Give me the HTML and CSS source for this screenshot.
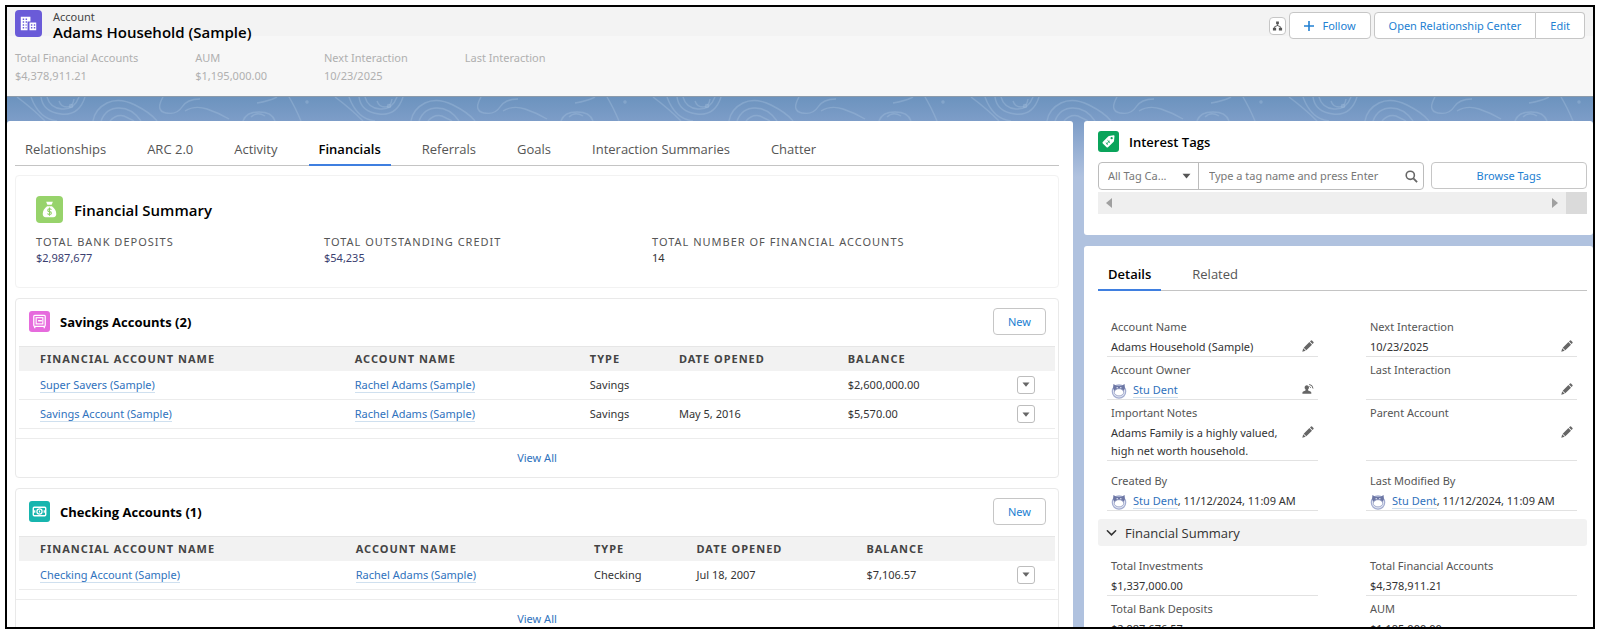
FILE: index.html
```html
<!DOCTYPE html>
<html lang="en">
<head>
<meta charset="utf-8">
<title>Adams Household (Sample) | Account</title>
<link rel="stylesheet" href="styles.css">
</head>
<body>
<svg class="sprite" aria-hidden="true">
  <symbol id="pencil" viewBox="0 0 12 12"><path d="M.3 11.700l.9-3.400 2.500 2.500zM1.700 7.700l5.700-5.600 2.600 2.600-5.700 5.600zM8 1.500l1-1q.5-.5 1 0l1.500 1.500q.4.500 0 1l-1 1z"/></symbol>
  <symbol id="owner" viewBox="0 0 12 12"><path d="M4.800 2.200a2.200 2.200 0 0 1 1.300 4v1.300l2.400 1.100q.8.400.8 1.200v1H.4v-1q0-.8.800-1.200l2.300-1.100V6.200A2.200 2.200 0 0 1 4.800 2.200z"/><path d="M7.200 1.500q3.500.2 3.800 4M7.500 3.500l1.300 1.200" fill="none" stroke="currentColor" stroke-width="1"/></symbol>
  <symbol id="bear" viewBox="0 0 16 16"><circle cx="8" cy="8.500" r="6.700" fill="#e3e7f3" stroke="#a3acd0" stroke-width="1.200"/><path d="M2.400 1l3 1.700h5.200l3-1.700.3 4.500-1.500 2.500H3.600L2.100 5.500z" fill="#6d77a5"/><ellipse cx="8" cy="9.300" rx="4.700" ry="3.600" fill="#fff" stroke="#8f98bf" stroke-width=".8"/><path d="M5.500 4.700h1.500M9 4.700h1.500" stroke="#dfe3f2" stroke-width="1"/></symbol>
  <symbol id="down" viewBox="0 0 10 6"><path d="M.6.4h8.800L5 5.800z"/></symbol>
</svg>
<div class="frame">
  <header class="record">
    <div class="record-top">
      <span class="icon icon-lg icon-account"><svg viewBox="0 0 28 28"><path d="M6 7h10v5h-3v9H6z" fill="#fff"/><path d="M15 13h7v8h-7z" fill="#fff"/><path d="M8 9.500h1.500M11 9.500h1.500M8 12.500h1.500M11 12.500h1.500M8 15.500h1.500M11 15.500h1M8 18.500h1.500M11 18.500h1M16.500 15.500h1.500M19.500 15.500H21M16.500 18.500h1.500M19.500 18.500H21" stroke="#6a5bd8" stroke-width="1.500"/></svg></span>
      <div class="record-name">
        <p class="kind">Account</p>
        <h1>Adams Household (Sample)</h1>
      </div>
      <div class="actions">
        <button class="btn hierarchy" type="button" aria-label="View hierarchy"><svg viewBox="0 0 12 12"><path d="M4.500 1h3v3h-3zM1 8h3.500v3H1zM7.500 8H11v3H7.500z"/><path d="M6 4v2M2.800 8V6.800L6 5.500l3.200 1.300V8" fill="none" stroke="currentColor"/></svg></button>
        <button class="btn follow" type="button"><svg viewBox="0 0 10 10"><path d="M5 0v10M0 5h10" stroke="currentColor" stroke-width="1.600"/></svg>Follow</button>
        <div class="group"><button class="btn" type="button">Open Relationship Center</button><button class="btn" type="button">Edit</button></div>
      </div>
    </div>
    <dl class="highlights">
      <div><dt>Total Financial Accounts</dt><dd>$4,378,911.21</dd></div>
      <div><dt>AUM</dt><dd>$1,195,000.00</dd></div>
      <div><dt>Next Interaction</dt><dd>10/23/2025</dd></div>
      <div><dt>Last Interaction</dt><dd></dd></div>
    </dl>
  </header>

  <div class="stage">
    <svg class="contours" aria-hidden="true">
      <defs><pattern id="topo" width="318" height="24" patternUnits="userSpaceOnUse">
        <g fill="none" stroke="#a3bedb" stroke-opacity=".4" stroke-width="1.400">
          <path d="M10 0q16 12 28 24M34 0q2 15 20 17t24-17M40 0q3 11 15 12t17-12M52 4q2 6 8 6t7-8M24 0q8 22 26 24M86 24q2-12 14-18t28 2 22 16M94 24q5-13 18-13t22 13M103 24q6-7 14-5l10 5M156 0q-8 14 3 16t16-6 18-8M178 14q10-6 22-2t22 10M236 24q3-9 16-9t16 9M244 20q6-6 14-1M250 6q12-2 20-6M282 0q6 10 12 24"/>
          <circle cx="64" cy="9" r="1.500"/><circle cx="300" cy="5" r="1"/>
        </g></pattern></defs>
      <rect width="100%" height="100%" fill="url(#topo)"/>
    </svg>

    <main class="panel main">
      <nav class="tabs">
        <a href="#">Relationships</a><a href="#">ARC 2.0</a><a href="#">Activity</a><a href="#" class="on" aria-current="page">Financials</a><a href="#">Referrals</a><a href="#">Goals</a><a href="#">Interaction Summaries</a><a href="#">Chatter</a>
      </nav>

      <section class="card summary">
        <div class="summary-head">
          <span class="icon icon-lg icon-money"><svg viewBox="0 0 28 28"><path d="M10.500 6h7l-1.300 3h-4.400z" fill="#fff"/><path d="M11.500 10.500h5q4.500 3.500 4.500 8 0 3.500-3 3.500h-8q-3 0-3-3.500 0-4.500 4.500-8z" fill="#fff"/><path d="M16 14.300q-.7-1-2-1-1.800 0-1.800 1.400t1.800 1.500 1.900 1.500-1.900 1.400q-1.400 0-2.100-1M14 12v8.500" fill="none" stroke="#8fce63" stroke-width="1.100"/></svg></span>
          <h2>Financial Summary</h2>
        </div>
        <dl class="totals">
          <div><dt>Total Bank Deposits</dt><dd class="navy">$2,987,677</dd></div>
          <div><dt>Total Outstanding Credit</dt><dd class="navy">$54,235</dd></div>
          <div><dt>Total Number of Financial Accounts</dt><dd>14</dd></div>
        </dl>
      </section>

      <section class="card list savings">
        <div class="list-head">
          <span class="icon icon-safe"><svg viewBox="0 0 22 22"><rect x="5" y="4.500" width="12" height="11.500" rx="1" fill="none" stroke="#fff" stroke-width="1.300"/><rect x="7.500" y="7" width="7" height="6.500" fill="none" stroke="#fff" stroke-width="1.200"/><path d="M9.500 10.200h4M6 16v2M16 16v2" stroke="#fff" stroke-width="1.400"/></svg></span>
          <h2>Savings Accounts (2)</h2>
          <button class="btn new" type="button">New</button>
        </div>
        <table>
          <colgroup><col class="c1"><col class="c2"><col class="c3"><col class="c4"><col></colgroup>
          <thead><tr><th>Financial Account Name</th><th>Account Name</th><th>Type</th><th>Date Opened</th><th>Balance</th><th class="menu"></th></tr></thead>
          <tbody>
            <tr><td><a href="#">Super Savers (Sample)</a></td><td><a href="#">Rachel Adams (Sample)</a></td><td>Savings</td><td></td><td>$2,600,000.00</td><td class="menu"><button type="button" aria-label="Row actions"><svg><use href="#down"/></svg></button></td></tr>
            <tr><td><a href="#">Savings Account (Sample)</a></td><td><a href="#">Rachel Adams (Sample)</a></td><td>Savings</td><td>May 5, 2016</td><td>$5,570.00</td><td class="menu"><button type="button" aria-label="Row actions"><svg><use href="#down"/></svg></button></td></tr>
          </tbody>
        </table>
        <footer><a href="#">View All</a></footer>
      </section>

      <section class="card list checking">
        <div class="list-head">
          <span class="icon icon-cash"><svg viewBox="0 0 22 22"><rect x="4.500" y="6.500" width="13" height="9" rx="1" fill="none" stroke="#fff" stroke-width="1.500"/><circle cx="11" cy="11" r="2.700" fill="none" stroke="#fff" stroke-width="1.300"/><path d="M6 9.800v2.400M16 9.800v2.400M11 10v2" stroke="#fff" stroke-width="1.300"/></svg></span>
          <h2>Checking Accounts (1)</h2>
          <button class="btn new" type="button">New</button>
        </div>
        <table>
          <colgroup><col class="c1"><col class="c2"><col class="c3"><col class="c4"><col></colgroup>
          <thead><tr><th>Financial Account Name</th><th>Account Name</th><th>Type</th><th>Date Opened</th><th>Balance</th><th class="menu"></th></tr></thead>
          <tbody>
            <tr><td><a href="#">Checking Account (Sample)</a></td><td><a href="#">Rachel Adams (Sample)</a></td><td>Checking</td><td>Jul 18, 2007</td><td>$7,106.57</td><td class="menu"><button type="button" aria-label="Row actions"><svg><use href="#down"/></svg></button></td></tr>
          </tbody>
        </table>
        <footer><a href="#">View All</a></footer>
      </section>
    </main>

    <aside class="side">
      <section class="panel tags">
        <div class="tags-head">
          <span class="icon icon-tag"><svg viewBox="0 0 22 22"><path d="M11.500 5.200l5-.7q.8 0 .8.800l-.5 5q0 .5-.4.900L10.500 17q-.8.700-1.500 0l-4-4q-.7-.800 0-1.500l5.600-5.800q.4-.4.900-.5z" fill="#fff"/><circle cx="14.300" cy="7.500" r="1.200" fill="#0aa45b"/><path d="M8.200 12.200l2.200 2M10 9.800l2.600 2.400M9 13.500l3-3" stroke="#0aa45b" stroke-width="1"/></svg></span>
          <h2>Interest Tags</h2>
        </div>
        <div class="tags-form">
          <div class="combo">
            <div class="select-wrap"><select aria-label="Tag category"><option>All Tag Ca...</option></select><svg><use href="#down"/></svg></div>
            <input type="text" aria-label="Tag name" placeholder="Type a tag name and press Enter">
            <svg class="search" viewBox="0 0 14 14"><circle cx="5.700" cy="5.700" r="4.400" fill="none" stroke="currentColor" stroke-width="1.700"/><path d="M9 9l4 4" stroke="currentColor" stroke-width="2"/></svg>
          </div>
          <button class="btn browse" type="button">Browse Tags</button>
        </div>
        <div class="scroll"><svg viewBox="0 0 6 10"><path d="M6 0v10L0 5z"/></svg><svg class="fwd" viewBox="0 0 6 10"><path d="M0 0v10l6-5z"/></svg><span class="corner"></span></div>
      </section>

      <section class="panel details">
        <nav class="tabs"><a href="#" class="on" aria-current="page">Details</a><a href="#">Related</a></nav>
        <dl class="fields">
          <div><dt>Account Name</dt><dd>Adams Household (Sample)<button type="button" aria-label="Edit Account Name"><svg><use href="#pencil"/></svg></button></dd></div>
          <div><dt>Next Interaction</dt><dd>10/23/2025<button type="button" aria-label="Edit Next Interaction"><svg><use href="#pencil"/></svg></button></dd></div>
          <div><dt>Account Owner</dt><dd><svg class="avatar"><use href="#bear"/></svg><a href="#">Stu Dent</a><button type="button" aria-label="Change Owner"><svg><use href="#owner"/></svg></button></dd></div>
          <div><dt>Last Interaction</dt><dd><button type="button" aria-label="Edit Last Interaction"><svg><use href="#pencil"/></svg></button></dd></div>
          <div><dt>Important Notes</dt><dd>Adams Family is a highly valued,<br>high net worth household.<button type="button" aria-label="Edit Important Notes"><svg><use href="#pencil"/></svg></button></dd></div>
          <div><dt>Parent Account</dt><dd><button type="button" aria-label="Edit Parent Account"><svg><use href="#pencil"/></svg></button></dd></div>
          <div class="audit"><dt>Created By</dt><dd><svg class="avatar"><use href="#bear"/></svg><a href="#">Stu Dent</a>, 11/12/2024, 11:09 AM</dd></div>
          <div class="audit"><dt>Last Modified By</dt><dd><svg class="avatar"><use href="#bear"/></svg><a href="#">Stu Dent</a>, 11/12/2024, 11:09 AM</dd></div>
        </dl>
        <button class="section" type="button" aria-expanded="true"><svg viewBox="0 0 12 8"><path d="M1.500 1.500L6 6l4.500-4.500" fill="none" stroke="currentColor" stroke-width="1.700" stroke-linecap="round"/></svg>Financial Summary</button>
        <dl class="fields">
          <div><dt>Total Investments</dt><dd>$1,337,000.00</dd></div>
          <div><dt>Total Financial Accounts</dt><dd>$4,378,911.21</dd></div>
          <div><dt>Total Bank Deposits</dt><dd>$2,987,676.57</dd></div>
          <div><dt>AUM</dt><dd>$1,195,000.00</dd></div>
        </dl>
      </section>
    </aside>
  </div>
</div>
</body>
</html>
```
FILE: styles.css
```css
* { box-sizing: border-box; }
body { margin: 0; padding: 5px; background: #fff; font-family: "Noto Sans", "Open Sans", sans-serif; font-size: 11px; line-height: 18px; color: #333; }
h1, h2, p, dl, dd { margin: 0; }
h1, h2 { font-family: "Open Sans", "Noto Sans", sans-serif; color: #000; font-weight: 600; }
a { color: #2f72bd; text-decoration: none; }
button, input, select { font: inherit; color: inherit; margin: 0; }
button { cursor: pointer; padding: 0; }
svg { display: block; fill: currentColor; }
.sprite { position: absolute; width: 0; height: 0; }

.frame { height: calc(100vh - 10px); border: 2px solid #000; overflow: hidden; display: flex; flex-direction: column; }

.icon { flex: none; display: block; width: 21px; height: 21px; border-radius: 3px; }
.icon svg { width: 100%; height: 100%; }
.icon-lg { width: 27px; height: 27px; border-radius: 4px; }
.icon-account { background: #6a5bd8; }
.icon-money { background: #97d36b; }
.icon-safe { background: #e66bdd; }
.icon-cash { background: #17b5ae; }
.icon-tag { background: #0aa45b; }

.btn { height: 27px; border: 1px solid #c6c6c6; border-radius: 4px; background: #fff; color: #2280d2; padding: 0 14px; }

/* record header */
.record { flex: none; height: 90px; padding: 3px 8px 0; background: linear-gradient(#f3f3f3 29px, #f7f7f7 29px); border-bottom: 1px solid #8c9bab; }
.record-top { display: flex; align-items: flex-start; }
.record-name { margin-left: 11px; }
.kind { line-height: 14px; color: #444; }
h1 { font-size: 15px; line-height: 16px; }
.actions { margin-left: auto; display: flex; align-items: center; padding-top: 2px; }
.hierarchy { width: 17px; height: 18px; padding: 2px; color: #555; margin-right: 3px; }
.hierarchy svg { width: 100%; height: 100%; }
.follow { display: flex; align-items: center; gap: 8px; margin-right: 3px; }
.follow svg { width: 10px; height: 10px; }
.group { display: flex; }
.group .btn:first-child { border-radius: 4px 0 0 4px; }
.group .btn:last-child { border-radius: 0 4px 4px 0; border-left: 0; }
.highlights { display: flex; gap: 57px; margin-top: 9px; color: #b0b0b0; }

/* page background and columns */
.stage { position: relative; flex: 1; min-height: 0; display: grid; grid-template-columns: minmax(0, 1066fr) minmax(0, 509fr); gap: 11px; padding-top: 24px; background: linear-gradient(#6c93be, #7d9dc8 24px, #b0c2df 80px); }
.contours { position: absolute; top: 0; left: 0; width: 100%; height: 24px; }
.panel { background: #fff; border-radius: 3px; }
.main { padding: 12px 14px 0 8px; }
.side { display: flex; flex-direction: column; gap: 11px; }

.tabs { display: flex; gap: 21px; border-bottom: 1px solid #c4c4c4; font-family: "Open Sans", "Noto Sans", sans-serif; font-size: 13px; }
.tabs a { padding: 6px 10px 5px; color: #555; line-height: 20px; border-bottom: 2px solid transparent; margin-bottom: -1px; }
.tabs .on { color: #000; font-weight: 600; border-color: #3f7fe0; }

.card { border: 1px solid #e9e9e9; border-radius: 4px; margin-top: 10px; background: #fff; }
.summary { margin-top: 9px; padding: 20px 20px 21px; border-color: #f2f2f2; }
.summary-head { display: flex; align-items: center; gap: 11px; }
.summary h2 { font-size: 15px; }
.totals { display: grid; grid-template-columns: 288fr 328fr 386fr; margin-top: 11px; }
.totals dt { text-transform: uppercase; letter-spacing: 1px; color: #555; line-height: 16px; }
.totals dd { line-height: 16px; }
.navy { color: #3b4070; }

.list-head { display: flex; align-items: center; padding: 9px 12px 11px 13px; }
.list h2, .tags h2 { font-size: 13px; margin-left: 10px; }
.list h2 { font-weight: 700; }
.new { margin-left: auto; width: 53px; }
table { width: calc(100% - 6px); margin: 0 3px; border-collapse: collapse; table-layout: fixed; }
.c1 { width: 32.4%; } .c2 { width: 22.7%; } .c3 { width: 8.6%; } .c4 { width: 16.3%; }
.checking .c1 { width: 32.5%; } .checking .c2 { width: 23%; } .checking .c3 { width: 9.9%; } .checking .c4 { width: 16.4%; }
th { height: 24px; padding: 0; text-align: left; background: #f2f2f2; border-top: 1px solid #e6e6e6; text-transform: uppercase; letter-spacing: 1px; color: #444; font-weight: 700; }
td { height: 29px; padding: 0; border-bottom: 1px solid #ececec; }
th:first-child, td:first-child { padding-left: 21px; }
td a, dd a { border-bottom: 1px solid #cfe0ef; }
.menu { width: 38px; }
.menu button { display: grid; place-items: center; width: 18px; height: 18px; border: 1px solid #bdbdbd; border-radius: 3px; background: #fff; color: #666; }
.menu svg { width: 8px; height: 5px; }
.list footer { border-top: 1px solid #ececec; margin-top: 9px; height: 39px; display: grid; place-items: center; }

/* interest tags */
.tags { padding: 10px 6px 21px 14px; }
.tags-head { display: flex; align-items: center; }
.tags-form { display: flex; gap: 7px; margin-top: 10px; }
.combo { flex: 1; min-width: 0; display: flex; align-items: center; height: 28px; border: 1px solid #bcbcbc; border-radius: 4px; color: #777; }
.select-wrap { flex: none; width: 100px; height: 100%; display: flex; align-items: center; border-right: 1px solid #bcbcbc; padding: 0 7px 0 9px; }
select { flex: 1; min-width: 0; appearance: none; border: 0; background: none; padding: 0; }
.select-wrap svg { width: 9px; height: 6px; color: #555; }
.combo input { flex: 1; min-width: 0; border: 0; background: none; padding: 0 10px; outline: 0; }
.combo input::placeholder { color: #777; opacity: 1; }
.search { width: 13px; height: 13px; margin-right: 5px; color: #666; }
.browse { flex: 0 0 32%; }
.scroll { display: flex; align-items: center; height: 22px; margin-top: 2px; background: #efefef; color: #a0a0a0; padding-left: 8px; }
.scroll svg { width: 6px; height: 10px; }
.scroll .fwd { margin-left: auto; margin-right: 8px; }
.corner { width: 21px; height: 100%; background: #dadada; }

/* details */
.details { flex: 1; padding: 12px 6px 0 14px; }
.details .tabs { margin-bottom: 23px; }
.fields { display: grid; grid-template-columns: 1fr 1fr; column-gap: 48px; padding: 0 10px 0 9px; }
.fields > div { padding: 4px 4px 0; border-bottom: 1px solid #e2e2e2; }
.fields dt { color: #555; }
.fields dd { position: relative; height: 20px; padding-top: 2px; white-space: nowrap; }
.fields dd:has(br) { height: 38px; }
.fields dd button { position: absolute; right: 0; top: 4px; width: 12px; height: 12px; border: 0; background: none; color: #666; }
.fields dd button svg { width: 100%; height: 100%; }
.avatar { display: inline-block; width: 16px; height: 16px; margin-right: 6px; vertical-align: middle; }
.fields .audit { padding-top: 11px; }
.section { display: flex; align-items: center; gap: 8px; width: 100%; height: 27px; margin: 8px 0 7px; padding: 0 8px; border: 0; border-radius: 3px; background: #f2f2f2; font-family: "Open Sans", "Noto Sans", sans-serif; font-size: 13px; color: #333; }
.section svg { width: 11px; height: 8px; }
```
